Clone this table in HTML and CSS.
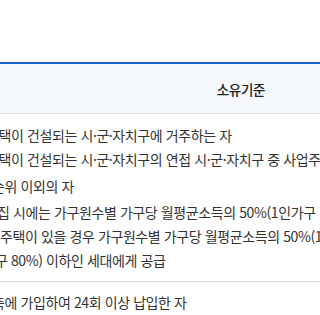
FILE: index.html
```html
<!DOCTYPE html>
<html lang="ko">
<head>
<meta charset="utf-8">
<link rel="stylesheet" href="styles.css">
</head>
<body>
<div class="page">
  <div class="table">
    <div class="thead">
      <div class="th th-main"></div>
      <div class="th">소유기준</div>
    </div>
    <div class="row">
      <div class="cell">
        <p class="line l1">주택이 건설되는 시·군·자치구에 거주하는 자</p>
        <p class="line l2">주택이 건설되는 시·군·자치구의 연접 시·군·자치구 중 사업주체가 정하는 지역에 거주하는 자</p>
        <p class="line l3">순위 이외의 자</p>
        <p class="line l4">집 시에는 가구원수별 가구당 월평균소득의 50%(1인가구 70%, 2인가구 60%) 이하인 세대</p>
        <p class="line l5">주택이 있을 경우 가구원수별 가구당 월평균소득의 50%(1인가구 90%, 2인가구 80%</p>
        <p class="line l6">구 80%) 이하인 세대에게 공급</p>
      </div>
    </div>
    <div class="row">
      <div class="cell cell-last">
        <p class="line l7">축에 가입하여 24회 이상 납입한 자</p>
      </div>
    </div>
  </div>
</div>
</body>
</html>
```

FILE: styles.css
```css
html, body {
  margin: 0;
  padding: 0;
  background: #fff;
}
body {
  width: 320px;
  height: 315px;
  overflow: hidden;
  font-family: "Noto Sans CJK KR", "Noto Sans", sans-serif;
  font-size: 14px;
  letter-spacing: -0.4px;
  color: #333;
}
.page {
  padding-top: 62px;
}
.table {
  border-top: 2px solid #1b5fc6;
}
.thead {
  display: grid;
  grid-template-columns: 1fr 158px;
  height: 49px;
  background: #f5f9fe;
  border-bottom: 1px solid #dcdcdc;
}
.th {
  display: flex;
  align-items: center;
  justify-content: center;
  color: #222;
  font-weight: 500;
  font-size: 13.5px;
  letter-spacing: -0.3px;
}
.row {
  border-bottom: 1px solid #dcdcdc;
  overflow: hidden;
}
.row:last-child {
  border-bottom: 0;
}
.cell {
  padding: 9px 0 9px 0;
  margin-left: -14px;
}
.cell-last {
  padding-top: 8px;
}
.line {
  margin: 0;
  line-height: 24px;
  white-space: nowrap;
}
.l1, .l2 { padding-left: 0; }
.l3 { margin-top: 3px; padding-left: 6px; }
.l4 { margin-top: 2px; padding-left: 11px; }
.l5 { padding-left: 14px; }
.l6 { padding-left: 9px; }
.l7 { padding-left: 6px; }
```
